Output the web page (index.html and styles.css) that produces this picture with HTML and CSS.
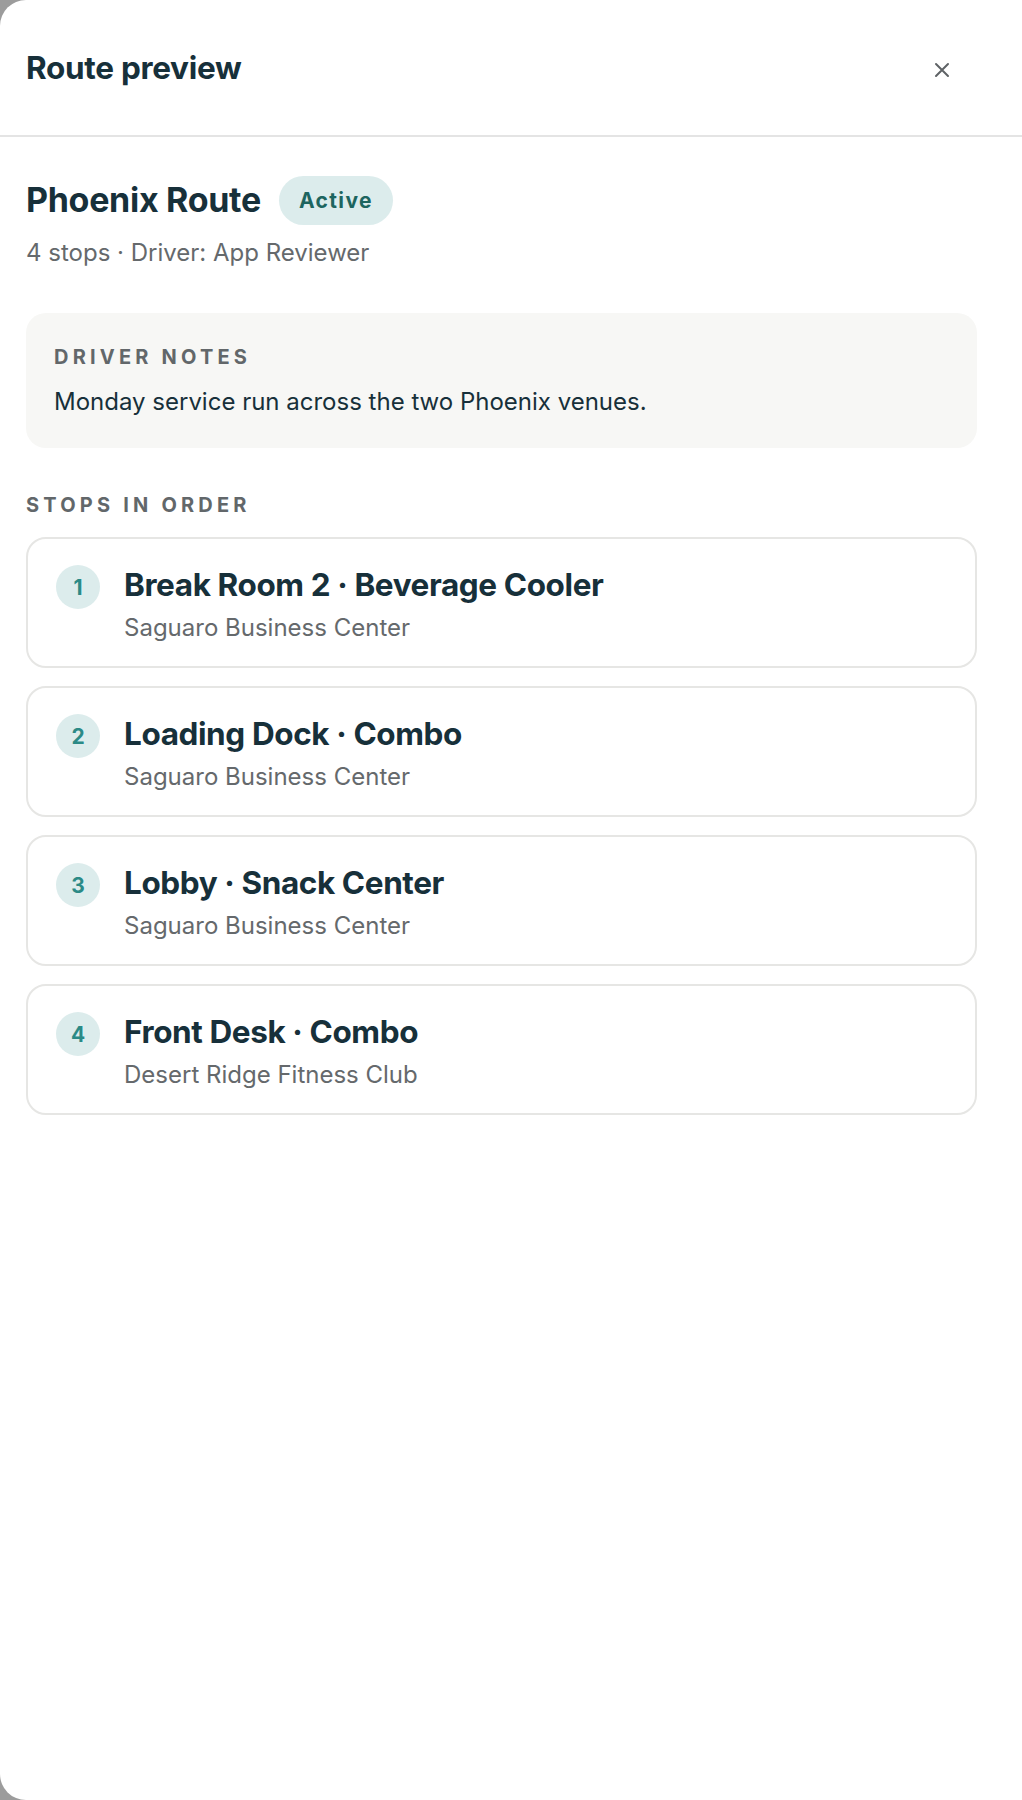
FILE: index.html
```html
<!DOCTYPE html>
<html lang="en">
<head>
    <meta charset="UTF-8">
    <meta name="viewport" content="width=device-width, initial-scale=1.0">
    <title>Route preview</title>
    <link rel="stylesheet" href="styles.css">
</head>
<body>

    <div class="sheet">
        <div class="sheet-header">
            <h1>Route preview</h1>
            <button class="close-btn" aria-label="Close">
                <svg width="16" height="16" viewBox="0 0 16 16"><path d="M2 2 L14 14 M14 2 L2 14" stroke="#5f6366" stroke-width="2" stroke-linecap="round"/></svg>
            </button>
        </div>

        <div class="sheet-body">
            <div class="route-title">
                <h2>Phoenix Route</h2>
                <span class="badge">Active</span>
            </div>
            <div class="route-meta">4 stops · Driver: App Reviewer</div>

            <div class="notes">
                <div class="label">Driver notes</div>
                <p>Monday service run across the two Phoenix venues.</p>
            </div>

            <div class="label stops-label">Stops in order</div>

            <div class="stops">
                <div class="stop">
                    <div class="num">1</div>
                    <div>
                        <div class="stop-name">Break Room 2 · Beverage Cooler</div>
                        <div class="stop-venue">Saguaro Business Center</div>
                    </div>
                </div>
                <div class="stop">
                    <div class="num">2</div>
                    <div>
                        <div class="stop-name">Loading Dock · Combo</div>
                        <div class="stop-venue">Saguaro Business Center</div>
                    </div>
                </div>
                <div class="stop">
                    <div class="num">3</div>
                    <div>
                        <div class="stop-name">Lobby · Snack Center</div>
                        <div class="stop-venue">Saguaro Business Center</div>
                    </div>
                </div>
                <div class="stop">
                    <div class="num">4</div>
                    <div>
                        <div class="stop-name">Front Desk · Combo</div>
                        <div class="stop-venue">Desert Ridge Fitness Club</div>
                    </div>
                </div>
            </div>
        </div>
    </div>

</body>
</html>
```

FILE: styles.css
```css
html, body {
    margin: 0;
    height: 100%;
}

body {
    background-color: #9c9c9c;
    font-family: Inter, "Noto Sans", sans-serif;
    color: #17303a;
}

.sheet {
    background: #fff;
    min-height: 1800px;
    border-radius: 26px 0 0 26px;
    box-sizing: border-box;
}

.sheet-header {
    height: 137px;
    border-bottom: 2px solid #e4e4e4;
    display: flex;
    align-items: center;
    justify-content: space-between;
    padding: 0 68px 0 26px;
    box-sizing: border-box;
}

.sheet-header h1 {
    margin: 0;
    font-size: 31.5px;
    font-weight: 700;
    letter-spacing: -0.3px;
}

.close-btn {
    background: none;
    border: none;
    padding: 4px;
    cursor: pointer;
    display: flex;
    margin-top: 4px;
}

.sheet-body {
    padding: 37px 45px 0 26px;
}

.route-title {
    display: flex;
    align-items: center;
    gap: 18px;
}

.route-title h2 {
    margin: 0;
    font-size: 34px;
    font-weight: 700;
    letter-spacing: -0.3px;
}

.badge {
    background: #dcecec;
    color: #1d655f;
    font-weight: 700;
    font-size: 21px;
    letter-spacing: 1.4px;
    height: 49px;
    line-height: 50px;
    padding: 0 20px;
    border-radius: 25px;
    margin-top: 2px;
}

.route-meta {
    margin-top: 13px;
    font-size: 24px;
    line-height: 30px;
    color: #65696c;
}

.notes {
    margin-top: 45px;
    background: #f7f7f5;
    border-radius: 20px;
    padding: 32px 28px 30px;
}

.label {
    font-size: 20px;
    font-weight: 700;
    letter-spacing: 4.2px;
    text-transform: uppercase;
    color: #62676a;
    line-height: 24px;
}

.notes p {
    margin: 17px 0 0;
    font-size: 24px;
    line-height: 32px;
    color: #17303a;
}

.stops-label {
    margin-top: 45px;
}

.stops {
    margin-top: 20px;
    display: flex;
    flex-direction: column;
    gap: 18px;
}

.stop {
    border: 2px solid #e6e6e4;
    border-radius: 20px;
    height: 131px;
    box-sizing: border-box;
    display: flex;
    align-items: flex-start;
    gap: 24px;
    padding: 26px 30px 0 28px;
}

.num {
    width: 44px;
    height: 44px;
    border-radius: 50%;
    background: #dcecec;
    color: #2b8a86;
    font-weight: 700;
    font-size: 21px;
    display: flex;
    align-items: center;
    justify-content: center;
    flex-shrink: 0;
}

.stop-name {
    font-size: 31.5px;
    font-weight: 700;
    letter-spacing: -0.4px;
    line-height: 40px;
}

.stop-venue {
    font-size: 24px;
    line-height: 30px;
    margin-top: 8px;
    color: #65696c;
}
```
